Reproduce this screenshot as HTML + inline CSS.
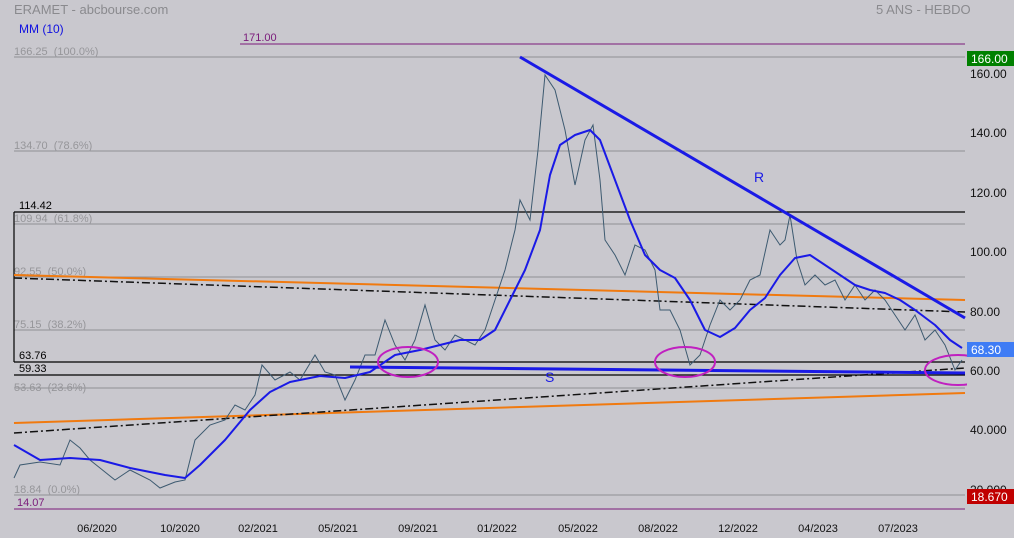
<!DOCTYPE html>
<html><head><meta charset="utf-8"><style>
html,body{margin:0;padding:0;background:#c9c8ce;}
svg{display:block;font-family:"Liberation Sans",sans-serif;}
</style></head><body>
<svg width="1014" height="538" viewBox="0 0 1014 538">
<rect width="1014" height="538" fill="#c9c8ce"/>
<text x="19" y="33" font-size="12" fill="#1010e0">MM (10)</text>
<g stroke="#8f8f94" stroke-width="1">
<line x1="14" y1="57" x2="965" y2="57"/><line x1="14" y1="151" x2="965" y2="151"/>
<line x1="14" y1="224" x2="965" y2="224"/><line x1="14" y1="277" x2="965" y2="277"/>
<line x1="14" y1="330" x2="965" y2="330"/><line x1="14" y1="388" x2="965" y2="388"/>
<line x1="14" y1="495" x2="965" y2="495"/>
</g>
<g font-size="11" fill="#96969a">
<text x="14" y="55">166.25 &#160;(100.0%)</text><text x="14" y="149">134.70 &#160;(78.6%)</text>
<text x="14" y="222">109.94 &#160;(61.8%)</text><text x="14" y="275">92.55 &#160;(50.0%)</text>
<text x="14" y="328">75.15 &#160;(38.2%)</text><text x="14" y="391">53.63 &#160;(23.6%)</text>
<text x="14" y="493">18.84 &#160;(0.0%)</text>
</g>
<line x1="240" y1="44" x2="965" y2="44" stroke="#7a1a7a"/>
<line x1="14" y1="509" x2="965" y2="509" stroke="#7a1a7a"/>
<text x="243" y="41" font-size="11" fill="#7a1a7a">171.00</text>
<text x="17" y="506" font-size="11" fill="#7a1a7a">14.07</text>
<g stroke="#000" stroke-width="1.2" fill="none">
<line x1="14" y1="212" x2="965" y2="212"/><line x1="14" y1="362" x2="965" y2="362"/>
<line x1="14" y1="375" x2="965" y2="375"/><line x1="14" y1="212" x2="14" y2="362"/>
</g>
<g font-size="11" fill="#000"><text x="19" y="209">114.42</text><text x="19" y="359">63.76</text><text x="19" y="372">59.33</text></g>
<g stroke="#f07a10" stroke-width="2"><line x1="14" y1="275" x2="965" y2="300"/><line x1="14" y1="423" x2="965" y2="393"/></g>
<g stroke="#111" stroke-width="1.5" stroke-dasharray="8,3,2,3"><line x1="14" y1="278" x2="965" y2="312"/><line x1="14" y1="433" x2="965" y2="368"/></g>
<polyline fill="none" stroke="#3d5a70" stroke-width="1" points="14,478 20,465 40,462 60,465 70,440 80,448 90,460 100,468 115,480 130,470 150,480 160,488 175,482 185,480 195,440 210,425 225,420 235,405 245,410 255,395 262,365 275,380 290,372 300,380 315,355 325,372 335,375 345,400 355,380 365,355 375,355 385,320 395,345 405,360 415,340 425,305 435,340 445,350 455,335 465,340 475,345 485,330 495,300 505,270 515,230 520,200 530,220 538,150 545,75 555,90 565,130 575,185 585,140 593,125 600,180 605,240 615,255 625,275 635,245 645,250 655,270 660,310 670,310 680,330 690,365 700,355 710,325 720,300 730,310 740,300 750,280 760,275 770,230 780,245 785,240 790,215 797,260 805,285 815,275 825,285 835,280 845,300 855,285 865,300 875,290 885,300 895,315 905,330 915,315 925,340 935,330 945,345 955,370 962,360"/>
<polyline fill="none" stroke="#1a1ae6" stroke-width="2" stroke-linejoin="round" points="14,445 40,460 70,458 100,460 130,468 165,475 185,478 200,465 225,440 250,410 270,392 290,382 320,376 345,378 370,372 395,355 420,350 440,345 460,340 480,340 495,330 510,300 525,270 540,230 550,175 560,145 575,135 590,130 600,140 615,180 630,220 645,255 660,270 675,278 690,300 705,330 720,337 735,328 750,310 765,298 780,275 795,258 810,255 825,265 840,275 855,285 870,290 885,293 900,300 915,310 935,325 950,340 962,348"/>
<g stroke="#1a1ae6" stroke-width="3"><line x1="520" y1="57" x2="965" y2="318"/><line x1="350" y1="367" x2="965" y2="373"/></g>
<text x="754" y="182" font-size="14" fill="#1a1ae6">R</text>
<text x="545" y="382" font-size="14" fill="#1a1ae6">S</text>
<g fill="none" stroke="#c020c0" stroke-width="2"><ellipse cx="408" cy="362" rx="30" ry="15"/><ellipse cx="685" cy="362" rx="30" ry="15"/><ellipse cx="958" cy="370" rx="33" ry="15"/></g>
<rect x="967" y="20" width="47" height="518" fill="#c9c8ce"/>
<text x="14" y="14" font-size="13" fill="#8a8a8e">ERAMET - abcbourse.com</text>
<text x="876" y="14" font-size="13" fill="#8a8a8e">5 ANS - HEBDO</text>
<g font-size="12" fill="#111">
<text x="970" y="78">160.00</text><text x="970" y="137">140.00</text><text x="970" y="197">120.00</text>
<text x="970" y="256">100.00</text><text x="970" y="316">80.00</text><text x="970" y="375">60.00</text>
<text x="970" y="434">40.000</text><text x="970" y="494">20.000</text>
</g>
<rect x="967" y="51" width="47" height="15" fill="#008000"/><text x="971" y="63" font-size="12" fill="#fff">166.00</text>
<rect x="967" y="342" width="47" height="15" fill="#3f7cf5"/><text x="971" y="354" font-size="12" fill="#fff">68.30</text>
<rect x="967" y="489" width="47" height="15" fill="#c00000"/><text x="971" y="501" font-size="12" fill="#fff">18.670</text>
<g font-size="11" fill="#111" text-anchor="middle">
<text x="97" y="532">06/2020</text><text x="180" y="532">10/2020</text><text x="258" y="532">02/2021</text>
<text x="338" y="532">05/2021</text><text x="418" y="532">09/2021</text><text x="497" y="532">01/2022</text>
<text x="578" y="532">05/2022</text><text x="658" y="532">08/2022</text><text x="738" y="532">12/2022</text>
<text x="818" y="532">04/2023</text><text x="898" y="532">07/2023</text>
</g>
</svg>
</body></html>
